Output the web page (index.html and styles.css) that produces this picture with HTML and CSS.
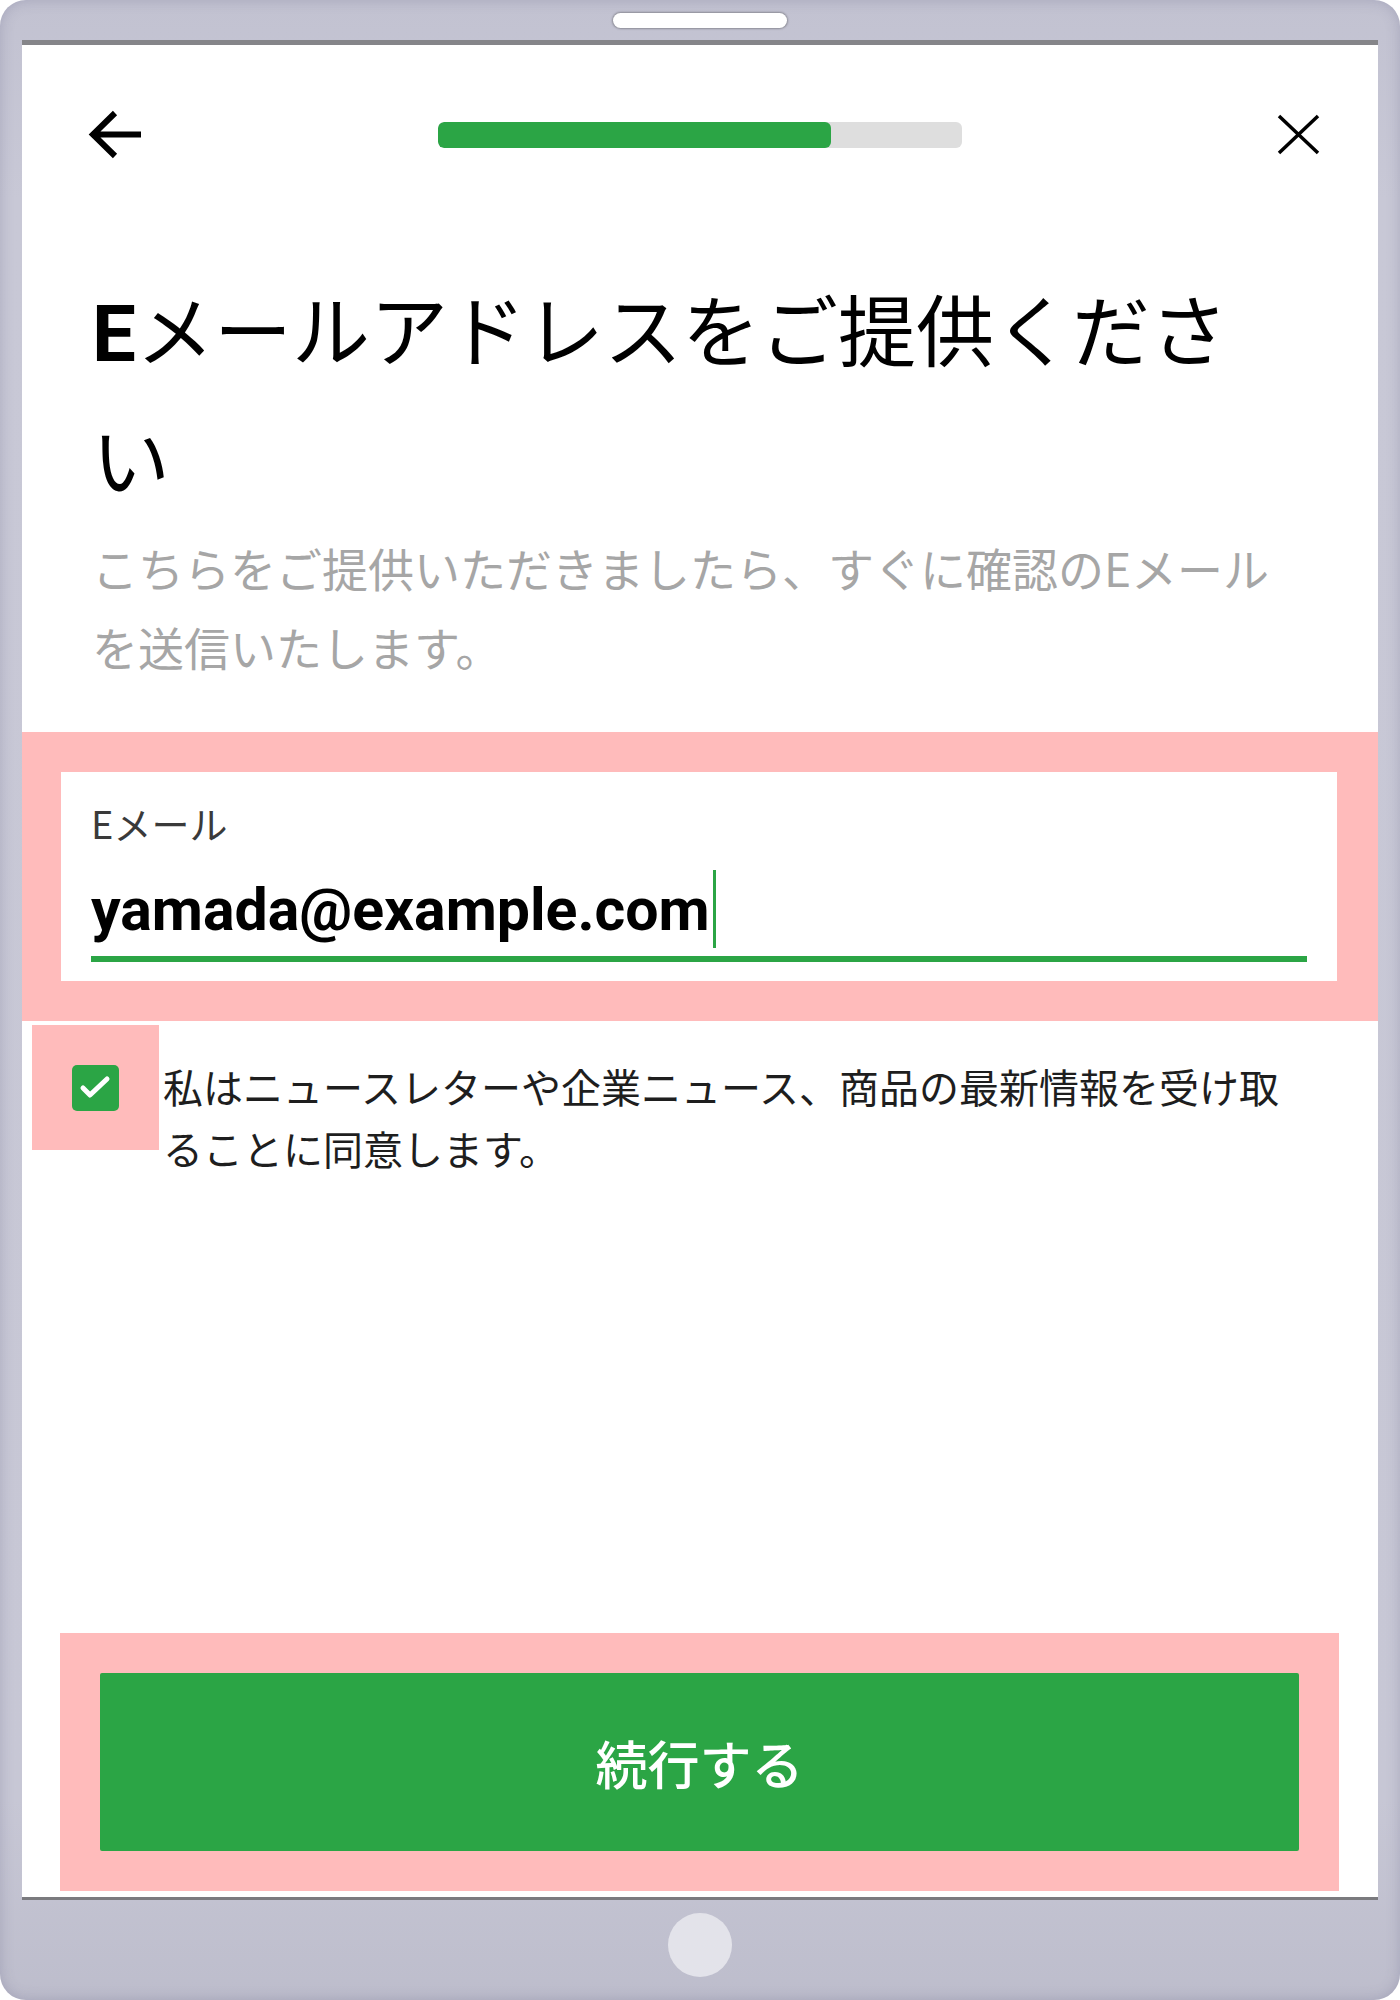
FILE: index.html
```
<!DOCTYPE html>
<html lang="ja">
<head>
  <meta charset="UTF-8">
  <title>Eメールアドレスの登録</title>
  <link rel="stylesheet" href="styles.css">
</head>
<body>
  <div class="device">
    <div class="speaker"></div>
    <div class="screen">
      <header class="topbar">
        <button class="icon-btn back" aria-label="戻る">
          <svg width="53" height="51" viewBox="0 0 53 51"><path d="M53 25.5H5M27 4L5 25.5 27 47" fill="none" stroke="#000" stroke-width="6"/></svg>
        </button>
        <div class="progress"><div class="progress-fill" style="width: 75%;"></div></div>
        <button class="icon-btn close" aria-label="閉じる">
          <svg width="43" height="41" viewBox="0 0 43 41"><path d="M2 2L41 39M41 2L2 39" fill="none" stroke="#000" stroke-width="3.5"/></svg>
        </button>
      </header>

      <div class="content">
        <h1 class="title"><span class="latin">E</span>メールアドレスをご提供ください</h1>
        <p class="lead">こちらをご提供いただきましたら、すぐに確認のEメールを送信いたします。</p>
      </div>

      <div class="zone field-zone">
        <div class="field">
          <div class="field-label">Eメール</div>
          <div class="field-value"><span>yamada@example.com</span><span class="caret"></span></div>
          <div class="field-line"></div>
        </div>
      </div>

      <div class="consent">
        <div class="zone check-zone">
          <span class="check">
            <svg width="47" height="46" viewBox="0 0 47 46"><path d="M11 23L18 30 35 14" fill="none" stroke="#fff" stroke-width="5" stroke-linecap="round" stroke-linejoin="round"/></svg>
          </span>
        </div>
        <p class="consent-text">私はニュースレターや企業ニュース、商品の最新情報を受け取ることに同意します。</p>
      </div>

      <div class="zone action-zone">
        <button class="continue">続行する</button>
      </div>
    </div>
    <div class="home-bar"><div class="home"></div></div>
  </div>
</body>
</html>
```

FILE: styles.css
```
body { margin: 0; font-family: "Noto Sans CJK JP", sans-serif; }
.device { width: 1400px; height: 2000px; box-sizing: border-box; padding: 0 22px; border-radius: 26px; background: linear-gradient(#c2c2d1, #c8c8d6 10%, #c7c7d5 90%, #bdbdcc); box-shadow: inset 0 0 14px rgba(80, 80, 120, 0.25); display: flex; flex-direction: column; }
.speaker { width: 174px; height: 15px; margin: 13px auto 12px; border-radius: 8px; background: #fff; box-shadow: 0 0 2px 1px #8c8c96; }
.screen { height: 1860px; box-sizing: border-box; background: #fff; border-top: 5px solid #858589; border-bottom: 3px solid #7a7a7e; display: flex; flex-direction: column; }
.topbar { height: 180px; display: grid; grid-template-columns: 1fr 524px 1fr; align-items: center; padding: 0 58px; }
.icon-btn { border: 0; background: none; padding: 0; display: flex; cursor: pointer; }
.icon-btn.back { justify-self: start; margin: -2px 0 0 8px; }
.icon-btn.close { justify-self: end; margin-top: -2px; }
.progress { height: 26px; border-radius: 6px; background: #dedede; overflow: hidden; }
.progress-fill { height: 100%; background: #2ba545; border-radius: 6px; }
.content { padding: 41px 80px 0 70px; }
.title { margin: 0; font-size: 78px; line-height: 122px; font-weight: 400; color: #000; }
.title .latin { font-family: "Roboto", sans-serif; font-weight: 700; }
.lead { margin: 10px 0 0; font-size: 46px; line-height: 79px; color: #a6a6a6; }
.zone { background: #ffbbbb; }
.field-zone { margin-top: 46px; padding: 40px 41px 40px 39px; }
.field { background: #fff; padding: 27px 30px 19px; }
.field-label { font-size: 38px; line-height: 48px; color: #3a3a3a; }
.field-value { margin-top: 22px; height: 80px; display: flex; align-items: center; font-family: "Roboto", sans-serif; font-weight: 700; font-size: 59px; color: #000; }
.caret { width: 3px; height: 78px; margin-left: 3px; background: #2ba545; }
.field-line { margin-top: 7px; height: 6px; background: #2ba545; }
.consent { display: flex; align-items: flex-start; gap: 4px; margin: 4px 80px 0 10px; }
.check-zone { width: 127px; height: 125px; display: flex; align-items: center; justify-content: center; flex-shrink: 0; }
.check { width: 47px; height: 46px; border-radius: 5px; background: #2ba545; display: flex; }
.consent-text { margin: 28px 0 0; padding-top: 2px; font-size: 40px; line-height: 62px; color: #1e1e1e; }
.action-zone { margin: auto 39px 6px 38px; padding: 40px; }
.continue { display: block; width: 100%; height: 178px; border: 0; border-radius: 2px; background: #2ba545; color: #fff; font-family: "Noto Sans CJK JP", sans-serif; font-size: 52px; font-weight: 500; cursor: pointer; }
.home-bar { height: 100px; display: flex; justify-content: center; padding-top: 13px; box-sizing: border-box; }
.home { width: 64px; height: 64px; border-radius: 50%; background: #e3e3ea; }
```
